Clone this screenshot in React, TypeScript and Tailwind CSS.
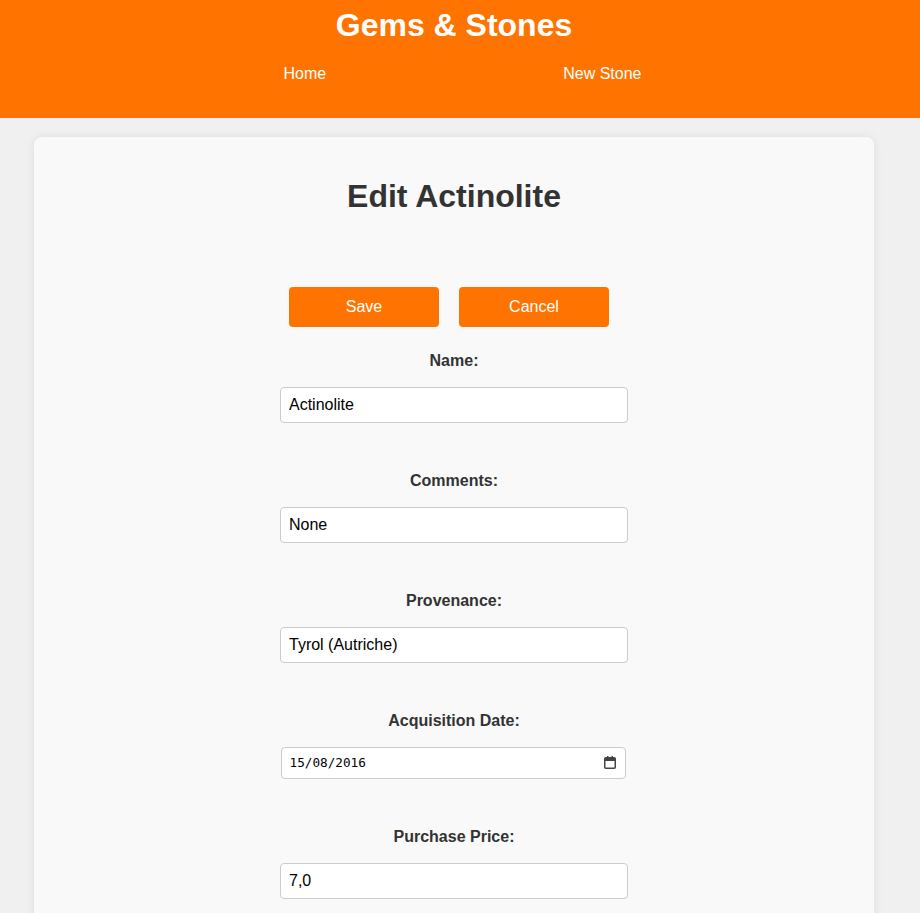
import { useState } from "react"

const fields = [
  { label: "Name:", value: "Actinolite" },
  { label: "Comments:", value: "None" },
  { label: "Provenance:", value: "Tyrol (Autriche)" },
]

function CalendarIcon() {
  return (
    <svg width="12" height="13" viewBox="0 0 12 13" className="text-[#444]">
      <rect x="0.75" y="1.75" width="10.5" height="10.5" rx="1" fill="none" stroke="currentColor" strokeWidth="1.5" />
      <rect x="1" y="2" width="10" height="3" fill="currentColor" />
      <rect x="3" y="0" width="1.5" height="3" fill="currentColor" />
      <rect x="7.5" y="0" width="1.5" height="3" fill="currentColor" />
    </svg>
  )
}

export default function App() {
  const [values, setValues] = useState(fields.map((f) => f.value))
  const [price, setPrice] = useState("7,0")

  return (
    <div className="min-h-screen bg-[#f0f0f0] font-['Liberation_Sans',Arial,sans-serif]">
      <header className="bg-[#ff7300] text-white h-[118px]">
        <div className="w-[908px] pt-[7px]">
          <h1 className="text-[32px] font-bold text-center leading-[37px]">Gems &amp; Stones</h1>
          <nav className="flex justify-center gap-[237px] pl-[17px] mt-[21px] text-[16px] leading-[18px]">
            <a href="#">Home</a>
            <a href="#">New Stone</a>
          </nav>
        </div>
      </header>

      <div className="w-[908px] pt-[19px]">
        <div className="mx-[34px] bg-[#f9f9f9] rounded-lg shadow-[0_0_10px_rgba(0,0,0,0.08)] px-5 pt-5 pb-10">
          <h1 className="mt-[21px] text-[32px] leading-[37px] font-bold text-center text-[#333]">Edit Actinolite</h1>

          <div className="flex justify-center gap-5 pr-[10px] mt-[72px]">
            <button className="w-[150px] h-10 rounded bg-[#ff7300] text-white text-[16px]">Save</button>
            <button className="w-[150px] h-10 rounded bg-[#ff7300] text-white text-[16px]">Cancel</button>
          </div>

          <form className="flex flex-col items-center mt-[25px]">
            {fields.map((f, i) => (
              <div key={f.label} className="flex flex-col items-center mb-[49px]">
                <label className="block font-bold text-[16px] leading-[18px] text-[#333] mb-[17px]">{f.label}</label>
                <input
                  type="text"
                  value={values[i]}
                  onChange={(e) => setValues(values.map((v, j) => (j === i ? e.target.value : v)))}
                  className="w-[348px] h-9 px-2 border border-[#ccc] rounded bg-white text-[16px] text-black outline-none"
                />
              </div>
            ))}

            <div className="flex flex-col items-center mb-[49px]">
              <label className="block font-bold text-[16px] leading-[18px] text-[#333] mb-[17px]">Acquisition Date:</label>
              <div className="relative w-[345px] h-8 mr-[2px]">
                <input
                  type="text"
                  defaultValue="15/08/2016"
                  className="w-full h-full pl-2 pb-[2px] border border-[#ccc] rounded bg-white text-[12.7px] text-black font-['DejaVu_Sans_Mono',monospace] outline-none"
                />
                <span className="absolute right-[10px] top-[9px] flex">
                  <CalendarIcon />
                </span>
              </div>
            </div>

            <div className="flex flex-col items-center mb-[49px]">
              <label className="block font-bold text-[16px] leading-[18px] text-[#333] mb-[17px]">Purchase Price:</label>
              <input
                type="text"
                value={price}
                onChange={(e) => setPrice(e.target.value)}
                className="w-[348px] h-9 px-2 border border-[#ccc] rounded bg-white text-[16px] text-black outline-none"
              />
            </div>
          </form>
        </div>
      </div>
    </div>
  )
}
